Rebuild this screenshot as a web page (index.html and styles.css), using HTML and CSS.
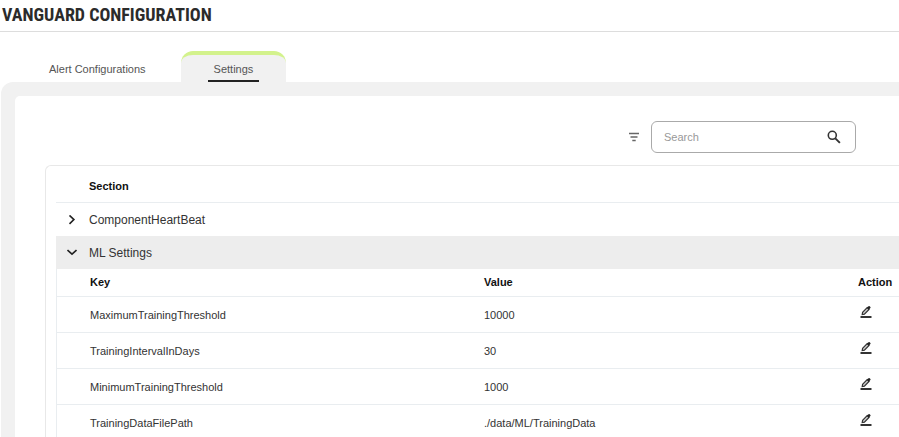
FILE: index.html
```html
<!DOCTYPE html>
<html lang="en">
<head>
  <meta charset="UTF-8"/>
  <meta name="viewport" content="width=device-width, initial-scale=1.0"/>
  <title>Vanguard Configuration</title>
  <link rel="stylesheet" href="styles.css">
</head>
<body>
  <!-- Shared icon shapes -->
  <svg class="icon-defs" aria-hidden="true">
    <symbol id="icon-edit" viewBox="0 0 16 14">
      <path d="M4.200 9.500 4.600 7.300 9.200 2.700 11 4.500 6.400 9.100Z" fill="#ccc" stroke="#333" stroke-width="1.200"/>
      <path d="M8.900 2.800 10.500 1.200q.6-.5 1.200 0l.7.700q.5.600 0 1.200L10.800 4.700Z" fill="#222"/>
      <path d="M2.500 11h11v2h-11Z" fill="#333"/>
    </symbol>
  </svg>

  <header class="page-header">
    <h1>VANGUARD CONFIGURATION</h1>
  </header>

  <nav class="tabs">
    <a class="tab" href="#alerts"><span>Alert Configurations</span></a>
    <a class="tab active" href="#settings"><span>Settings</span></a>
  </nav>

  <main class="panel">
    <div class="panel-body">
      <form class="toolbar">
        <button type="button" class="icon-button" aria-label="Filter">
          <svg width="10" height="10" viewBox="0 0 10 10" fill="none" stroke="#666" stroke-width="1.3">
            <path d="M0 1.500h10M1.500 5h7M3.300 8.500h3.400"/>
          </svg>
        </button>
        <div class="search-box">
          <input type="search" placeholder="Search" aria-label="Search">
          <button type="submit" class="icon-button" aria-label="Run search">
            <svg width="14" height="14" viewBox="0 0 14 14" fill="none" stroke="#333" stroke-width="1.6">
              <circle cx="5.300" cy="5.300" r="4"/>
              <path d="m8.300 8.300 4.600 4.600" stroke-width="1.900"/>
            </svg>
          </button>
        </div>
      </form>

      <div class="card">
        <table class="sections">
          <thead>
            <tr>
              <th class="toggle-cell"></th>
              <th>Section</th>
            </tr>
          </thead>
          <tbody>
            <tr>
              <td class="toggle-cell">
                <button type="button" class="icon-button" aria-label="Expand ComponentHeartBeat" aria-expanded="false">
                  <svg width="10" height="10" viewBox="0 0 10 10" fill="none" stroke="#222" stroke-width="1.600">
                    <path d="m2.500 .4 4.400 4.200-4.400 4.200"/>
                  </svg>
                </button>
              </td>
              <td>ComponentHeartBeat</td>
            </tr>
            <tr class="open">
              <td class="toggle-cell">
                <button type="button" class="icon-button" aria-label="Collapse ML Settings" aria-expanded="true">
                  <svg width="10" height="10" viewBox="0 0 10 10" fill="none" stroke="#222" stroke-width="1.600">
                    <path d="m.5 2 4.500 4.200 4.500-4.200"/>
                  </svg>
                </button>
              </td>
              <td>ML Settings</td>
            </tr>
          </tbody>
        </table>

        <table class="settings">
          <thead>
            <tr>
              <th>Key</th>
              <th class="value-col">Value</th>
              <th class="action-col">Action</th>
            </tr>
          </thead>
          <tbody>
            <tr>
              <td>MaximumTrainingThreshold</td>
              <td>10000</td>
              <td class="action-cell"><button type="button" class="icon-button" aria-label="Edit MaximumTrainingThreshold"><svg width="16" height="14"><use href="#icon-edit"/></svg></button></td>
            </tr>
            <tr>
              <td>TrainingIntervalInDays</td>
              <td>30</td>
              <td class="action-cell"><button type="button" class="icon-button" aria-label="Edit TrainingIntervalInDays"><svg width="16" height="14"><use href="#icon-edit"/></svg></button></td>
            </tr>
            <tr>
              <td>MinimumTrainingThreshold</td>
              <td>1000</td>
              <td class="action-cell"><button type="button" class="icon-button" aria-label="Edit MinimumTrainingThreshold"><svg width="16" height="14"><use href="#icon-edit"/></svg></button></td>
            </tr>
            <tr>
              <td>TrainingDataFilePath</td>
              <td>./data/ML/TrainingData</td>
              <td class="action-cell"><button type="button" class="icon-button" aria-label="Edit TrainingDataFilePath"><svg width="16" height="14"><use href="#icon-edit"/></svg></button></td>
            </tr>
          </tbody>
        </table>
      </div>
    </div>
  </main>
</body>
</html>
```
FILE: styles.css
```css
:root {
  --panel: #f1f1f1;
  --line: #e9edf0;
  --text: #333;
  --accent: #d3f28c;
}

* {
  box-sizing: border-box;
  margin: 0;
  padding: 0;
}

html {
  scrollbar-width: none;
}

body {
  font-family: 'Liberation Sans', Arial, sans-serif;
  font-size: 11px;
  line-height: 16px;
  color: var(--text);
  background: #fff;
}

.icon-defs {
  display: none;
}

.icon-button {
  display: flex;
  border: none;
  background: none;
  cursor: pointer;
}

/* Header */
.page-header {
  padding: 3px 2px 4px;
  border-bottom: 1px solid #ddd;
}

h1 {
  font-family: 'Roboto Condensed', 'Arial Narrow', sans-serif;
  font-size: 18px;
  line-height: 24px;
  color: #2b2b2b;
}

/* Tabs */
.tabs {
  display: flex;
  gap: 2px;
  padding: 19px 16px 0;
}

.tab {
  padding: 6px 27px 0;
  border-top: 4px solid transparent;
  color: #555;
  text-decoration: none;
}

.tab span {
  display: block;
  padding: 0 6px 3px;
  border-bottom: 2px solid transparent;
}

.tab.active {
  background: var(--panel);
  border-top-color: var(--accent);
  border-radius: 12px 12px 0 0;
}

.tab.active span {
  border-bottom-color: #222;
}

/* Panel */
.panel {
  margin-left: 1px;
  padding: 14px 0 0 14px;
  background: var(--panel);
  border-radius: 12px 0 0 0;
}

.panel-body {
  padding: 25px 0 0 30px;
  background: #fff;
  border-radius: 5px 0 0 0;
}

.toolbar {
  display: flex;
  justify-content: flex-end;
  align-items: center;
  gap: 12px;
  padding-right: 43px;
  margin-bottom: 12px;
}

.search-box {
  display: flex;
  align-items: center;
  width: 205px;
  height: 32px;
  padding: 0 14px 0 12px;
  border: 1px solid #aaa;
  border-radius: 6px;
}

.search-box input {
  flex: 1;
  min-width: 0;
  border: none;
  outline: none;
  font: inherit;
  color: var(--text);
}

.search-box input::placeholder {
  color: #999;
}

/* Tables */
.card {
  padding-left: 10px;
  border: 1px solid #e8e8e8;
  border-right: none;
  border-bottom: none;
  border-radius: 6px 0 0 0;
}

table {
  width: 100%;
  border-collapse: separate;
  border-spacing: 0;
  table-layout: fixed;
}

th {
  text-align: left;
  color: #111;
}

.sections td {
  height: 33px;
  font-size: 12px;
  vertical-align: middle;
}

.sections th {
  height: 37px;
  padding-top: 4px;
  border-bottom: 1px solid var(--line);
}

.sections .toggle-cell {
  width: 33px;
  padding-left: 11px;
}

.open td {
  background: #ededed;
}

.settings {
  border-left: 1px solid var(--line);
}

.settings th,
.settings td {
  height: 36px;
  border-bottom: 1px solid var(--line);
}

.settings th {
  height: 28px;
  padding-bottom: 2px;
}

.settings th:first-child,
.settings td:first-child {
  padding-left: 33px;
}

.settings .action-cell {
  padding-bottom: 5px;
}

.value-col {
  width: 374px;
}

.action-col {
  width: 41px;
}
```
